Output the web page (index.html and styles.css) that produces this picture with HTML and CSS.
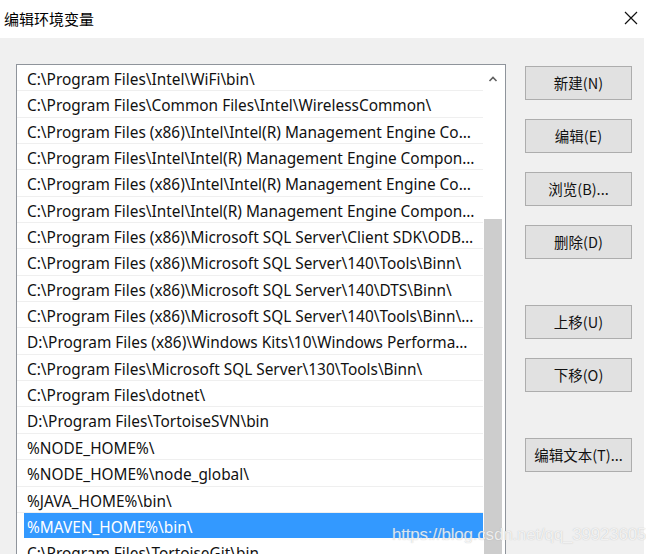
FILE: index.html
```html
<!DOCTYPE html>
<html lang="zh-CN">
<head>
<meta charset="utf-8">
<title>编辑环境变量</title>
<link rel="stylesheet" href="styles.css">
</head>
<body>
<div class="window">
  <div class="titlebar">
    <span class="title">编辑环境变量</span>
    <svg class="close" width="14" height="14" viewBox="0 0 14 14"><path d="M1 1 L13 13 M13 1 L1 13" stroke="#111" stroke-width="1.2" fill="none"/></svg>
  </div>
  <div class="content">
    <div class="listbox">
      <div class="rows">
        <div class="row">C:\Program Files\Intel\WiFi\bin\</div>
        <div class="row">C:\Program Files\Common Files\Intel\WirelessCommon\</div>
        <div class="row">C:\Program Files (x86)\Intel\Intel(R) Management Engine Components\DAL</div>
        <div class="row">C:\Program Files\Intel\Intel(R) Management Engine Components\DAL</div>
        <div class="row">C:\Program Files (x86)\Intel\Intel(R) Management Engine Components\IPT</div>
        <div class="row">C:\Program Files\Intel\Intel(R) Management Engine Components\IPT</div>
        <div class="row">C:\Program Files (x86)\Microsoft SQL Server\Client SDK\ODBC\130\Tools\Binn\</div>
        <div class="row">C:\Program Files (x86)\Microsoft SQL Server\140\Tools\Binn\</div>
        <div class="row">C:\Program Files (x86)\Microsoft SQL Server\140\DTS\Binn\</div>
        <div class="row">C:\Program Files (x86)\Microsoft SQL Server\140\Tools\Binn\ManagementStudio\</div>
        <div class="row">D:\Program Files (x86)\Windows Kits\10\Windows Performance Toolkit\</div>
        <div class="row">C:\Program Files\Microsoft SQL Server\130\Tools\Binn\</div>
        <div class="row">C:\Program Files\dotnet\</div>
        <div class="row">D:\Program Files\TortoiseSVN\bin</div>
        <div class="row">%NODE_HOME%\</div>
        <div class="row">%NODE_HOME%\node_global\</div>
        <div class="row">%JAVA_HOME%\bin\</div>
        <div class="row selected">%MAVEN_HOME%\bin\</div>
        <div class="row">C:\Program Files\TortoiseGit\bin</div>
      </div>
      <div class="scrollbar">
        <div class="arrow">
          <svg width="10" height="8" viewBox="0 0 10 8"><path d="M1.5 6 L5 2.5 L8.5 6" stroke="#606060" stroke-width="1.6" fill="none"/></svg>
        </div>
        <div class="thumb"></div>
      </div>
    </div>
    <div class="buttons">
      <div class="btn">新建(N)</div>
      <div class="btn">编辑(E)</div>
      <div class="btn">浏览(B)...</div>
      <div class="btn">删除(D)</div>
      <div class="btn spaced">上移(U)</div>
      <div class="btn">下移(O)</div>
      <div class="btn spaced">编辑文本(T)...</div>
    </div>
  </div>
  <div class="watermark">https://blog.csdn.net/qq_39923605</div>
</div>
</body>
</html>
```

FILE: styles.css
```css
html, body {
  margin: 0;
  padding: 0;
}
body {
  width: 646px;
  height: 554px;
  overflow: hidden;
  background: #ffffff;
  font-family: "Noto Sans", "Noto Sans CJK SC", sans-serif;
  color: #000;
}
.window {
  position: relative;
  width: 646px;
  height: 554px;
  overflow: hidden;
}
.titlebar {
  height: 38px;
  background: #ffffff;
  display: flex;
  align-items: center;
  justify-content: space-between;
  padding: 0 8px 0 4px;
}
.title {
  font-family: "Noto Sans CJK SC", sans-serif;
  font-size: 15px;
  color: #000;
  margin-top: -2px;
}
.close {
  margin-top: -2px;
}
.content {
  height: 516px;
  background: #f0f0f0;
  margin-right: 2px;
  padding: 26px 0 0 16px;
  box-sizing: border-box;
  display: flex;
  align-items: flex-start;
}
.listbox {
  width: 490px;
  height: 520px;
  box-sizing: border-box;
  border: 1px solid #8f949b;
  border-bottom: none;
  background: #ffffff;
  display: flex;
}
.rows {
  width: 466px;
  flex: none;
}
.row {
  height: 26.35px;
  box-sizing: border-box;
  border-bottom: 1px solid #efefef;
  padding: 5px 8px 0 10px;
  font-size: 15.4px;
  line-height: 20px;
  white-space: nowrap;
  overflow: hidden;
  text-overflow: ellipsis;
  color: #111;
}
.row.selected {
  background: #3399ff;
  color: #ffffff;
  margin-left: 7px;
  padding-left: 3px;
  border-bottom-color: #ffffff;
}
.scrollbar {
  width: 22px;
  flex: none;
  display: flex;
  flex-direction: column;
  padding-left: 1px;
  box-sizing: border-box;
}
.arrow {
  height: 154px;
  width: 18px;
  display: flex;
  justify-content: center;
  align-items: flex-start;
  padding-top: 10px;
  box-sizing: border-box;
}
.thumb {
  width: 18px;
  flex: 1;
  background: #cdcdcd;
}
.buttons {
  margin-left: 19px;
  margin-top: 2px;
  display: flex;
  flex-direction: column;
  gap: 19px;
}
.btn {
  width: 107px;
  height: 34px;
  box-sizing: border-box;
  border: 1px solid #adadad;
  background: #e1e1e1;
  display: flex;
  align-items: center;
  justify-content: center;
  font-family: "Noto Sans CJK SC", sans-serif;
  font-size: 14.5px;
  line-height: 18px;
  color: #111;
}
.btn.spaced {
  margin-top: 27px;
}
.watermark {
  position: absolute;
  left: 392px;
  top: 525px;
  font-family: "Liberation Sans", Arial, sans-serif;
  font-size: 17px;
  letter-spacing: -0.2px;
  color: rgba(255, 255, 255, 0.78);
  text-shadow: 0 0 1px rgba(140, 140, 140, 0.55);
  white-space: nowrap;
}
```
